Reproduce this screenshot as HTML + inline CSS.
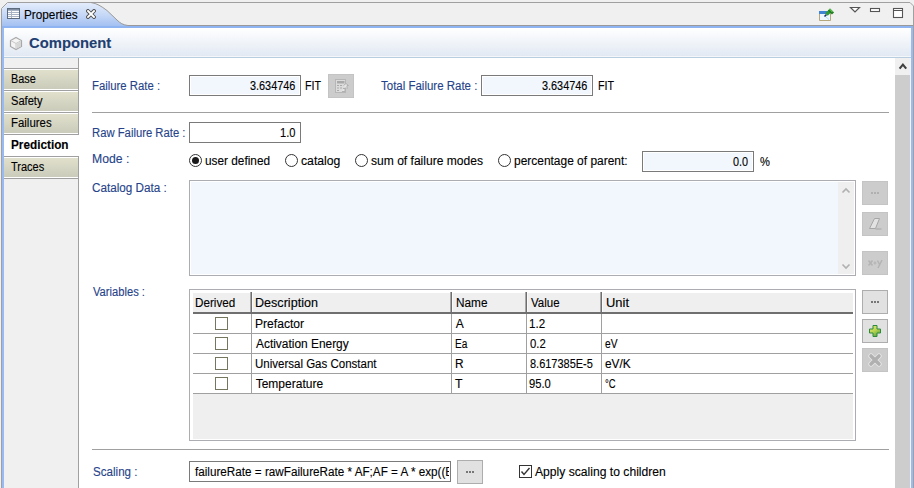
<!DOCTYPE html>
<html><head><meta charset="utf-8"><style>
html,body{margin:0;padding:0;}
body{width:914px;height:488px;overflow:hidden;position:relative;background:#f0f0f0;font-family:"Liberation Sans",sans-serif;}
div,span,svg{position:absolute;box-sizing:border-box;}
span{white-space:pre;transform-origin:0 0;-webkit-text-stroke:0.12px currentColor;}
</style></head><body>
<svg style="left:0;top:0" width="914" height="488" viewBox="0 0 914 488">
<defs>
<linearGradient id="tabg" x1="0" y1="0" x2="0" y2="1">
<stop offset="0" stop-color="#e3ecfb"/><stop offset="0.5" stop-color="#c4d7f6"/><stop offset="1" stop-color="#9dbcf0"/></linearGradient>
<linearGradient id="hdrg" x1="0" y1="0" x2="0" y2="1">
<stop offset="0" stop-color="#ffffff"/><stop offset="1" stop-color="#e2e9f3"/></linearGradient>
<linearGradient id="lt" x1="0" y1="0" x2="0" y2="1">
<stop offset="0" stop-color="#e0e0cf"/><stop offset="1" stop-color="#cfcfbf"/></linearGradient>
</defs>
<path d="M1.5,488 L1.5,8.5 L7.5,2.5 L910,2.5 L913.5,6 L913.5,488" fill="#f0f0f0" stroke="#a0a0a0" stroke-width="1"/>
<path d="M2,28 L2,9 L8,3 L92,3 C97,3.5 101,6 107,10.5 L117,20 C120,23 123,25 128,25.5 L128,28 Z" fill="url(#tabg)"/>
<path d="M91,2.5 C97,3.5 101,6 107,10.5 L117,20 C120,23 123,25 128,25.5 L913,25.5" fill="none" stroke="#999" stroke-width="1"/>
<rect x="2" y="26" width="911" height="462" fill="#99bbf4"/><rect x="2" y="26" width="911" height="2" fill="#8fb4f2"/>
<rect x="4" y="28" width="907" height="460" fill="#ffffff"/>
<rect x="4" y="28" width="907" height="28" fill="url(#hdrg)"/>
<rect x="4" y="56" width="907" height="1" fill="#f4f7fa"/>
<rect x="4" y="57" width="907" height="1" fill="#b8cde0"/>
<rect x="4" y="58" width="74" height="430" fill="#f0f0f0"/>
<rect x="78" y="58" width="1" height="430" fill="#a0a0a0"/>
</svg>
<div style="left:4px;top:68px;width:74px;height:1px;background:#a0a0a0;"></div>
<div style="left:4px;top:69px;width:74px;height:1px;background:#fff;"></div>
<div style="left:4px;top:70px;width:74px;height:19px;background:linear-gradient(#e0e0cc,#cbcbbb);"></div>
<div style="left:4px;top:89px;width:74px;height:1px;background:#fff;"></div>
<div style="left:4px;top:90px;width:74px;height:1px;background:#a0a0a0;"></div>
<div style="left:4px;top:91px;width:74px;height:1px;background:#fff;"></div>
<div style="left:4px;top:92px;width:74px;height:19px;background:linear-gradient(#e0e0cc,#cbcbbb);"></div>
<div style="left:4px;top:111px;width:74px;height:1px;background:#fff;"></div>
<div style="left:4px;top:112px;width:74px;height:1px;background:#a0a0a0;"></div>
<div style="left:4px;top:113px;width:74px;height:1px;background:#fff;"></div>
<div style="left:4px;top:114px;width:74px;height:19px;background:linear-gradient(#e0e0cc,#cbcbbb);"></div>
<div style="left:4px;top:133px;width:74px;height:1px;background:#fff;"></div>
<div style="left:4px;top:134px;width:75px;height:22px;background:#fff;"></div>
<div style="left:4px;top:134px;width:75px;height:1px;background:#a0a0a0;"></div>
<div style="left:4px;top:156px;width:74px;height:1px;background:#a0a0a0;"></div>
<div style="left:4px;top:157px;width:74px;height:1px;background:#fff;"></div>
<div style="left:4px;top:158px;width:74px;height:19px;background:linear-gradient(#e0e0cc,#cbcbbb);"></div>
<div style="left:4px;top:177px;width:74px;height:1px;background:#fff;"></div>
<div style="left:4px;top:178px;width:74px;height:1px;background:#a0a0a0;"></div>
<span style="left:10.59px;top:72.59px;font-size:12px;line-height:12px;color:#000;transform:scaleX(0.9073);">Base</span>
<span style="left:11.04px;top:94.59px;font-size:12px;line-height:12px;color:#000;transform:scaleX(0.9254);">Safety</span>
<span style="left:10.55px;top:116.59px;font-size:12px;line-height:12px;color:#000;transform:scaleX(0.9516);">Failures</span>
<span style="left:10.72px;top:138.59px;font-size:12px;line-height:12px;color:#000;font-weight:bold;transform:scaleX(0.9807);">Prediction</span>
<span style="left:11.23px;top:160.59px;font-size:12px;line-height:12px;color:#000;transform:scaleX(0.9155);">Traces</span>
<span style="left:24.42px;top:8.89px;font-size:12px;line-height:12px;color:#000;transform:scaleX(0.9812);">Properties</span>
<span style="left:28.93px;top:35.48px;font-size:15.5px;line-height:15.5px;color:#1f3e72;font-weight:bold;transform:scaleX(0.9555);">Component</span>
<div style="left:895px;top:58px;width:15px;height:17px;background:#f0f0f0;"></div>
<div style="left:895px;top:75px;width:15px;height:413px;background:#cdcdcd;"></div>
<div style="left:910px;top:58px;width:1px;height:430px;background:#f4f4f4;"></div>
<span style="left:92.05px;top:79.59px;font-size:12px;line-height:12px;color:#26438a;transform:scaleX(0.9456);">Failure Rate :</span>
<span style="left:380.51px;top:79.59px;font-size:12px;line-height:12px;color:#26438a;transform:scaleX(0.9567);">Total Failure Rate :</span>
<span style="left:92.06px;top:126.59px;font-size:12px;line-height:12px;color:#26438a;transform:scaleX(0.9403);">Raw Failure Rate :</span>
<span style="left:91.98px;top:152.59px;font-size:12px;line-height:12px;color:#26438a;transform:scaleX(1.0173);">Mode :</span>
<span style="left:92.41px;top:182.09px;font-size:12px;line-height:12px;color:#26438a;transform:scaleX(0.9760);">Catalog Data :</span>
<span style="left:92.91px;top:285.59px;font-size:12px;line-height:12px;color:#26438a;transform:scaleX(0.9304);">Variables :</span>
<span style="left:92.52px;top:465.59px;font-size:12px;line-height:12px;color:#26438a;transform:scaleX(0.9662);">Scaling :</span>
<div style="left:92px;top:112px;width:797px;height:1px;background:#a0a0a0;"></div>
<div style="left:92px;top:449px;width:797px;height:1px;background:#a0a0a0;"></div>
<div style="left:189px;top:75px;width:112px;height:21px;border:1px solid #7a7a7a;background:#f2f7fe;box-shadow:inset 0 0 0 1px #fff;"></div>
<span style="left:249.85px;top:79.99px;font-size:12px;line-height:12px;color:#000;transform:scaleX(0.9063);">3.634746</span>
<span style="left:305.31px;top:79.99px;font-size:12px;line-height:12px;color:#000;transform:scaleX(0.8929);">FIT</span>
<div style="left:328px;top:74px;width:26px;height:24px;background:#cccccc;border:1px solid #c4c4c4;"></div>
<div style="left:481px;top:75px;width:112px;height:21px;border:1px solid #7a7a7a;background:#f2f7fe;box-shadow:inset 0 0 0 1px #fff;"></div>
<span style="left:541.85px;top:79.99px;font-size:12px;line-height:12px;color:#000;transform:scaleX(0.9063);">3.634746</span>
<span style="left:597.51px;top:79.99px;font-size:12px;line-height:12px;color:#000;transform:scaleX(0.8929);">FIT</span>
<div style="left:189px;top:122px;width:112px;height:21px;border:1px solid #7a7a7a;background:#fff;box-shadow:inset 0 0 0 1px #fff;"></div>
<span style="left:279.96px;top:126.69px;font-size:12px;line-height:12px;color:#000;transform:scaleX(0.9281);">1.0</span>
<div style="left:189px;top:154px;width:13px;height:13px;border:1px solid #333;border-radius:50%;background:#fff;"></div>
<div style="left:192px;top:157px;width:7px;height:7px;border-radius:50%;background:#1a1a1a;"></div>
<span style="left:204.71px;top:154.59px;font-size:12px;line-height:12px;color:#000;transform:scaleX(0.9845);">user defined</span>
<div style="left:284.5px;top:154px;width:13px;height:13px;border:1px solid #333;border-radius:50%;background:#fff;"></div>
<span style="left:301.29px;top:154.59px;font-size:12px;line-height:12px;color:#000;transform:scaleX(1.0187);">catalog</span>
<div style="left:355px;top:154px;width:13px;height:13px;border:1px solid #333;border-radius:50%;background:#fff;"></div>
<span style="left:371.10px;top:154.59px;font-size:12px;line-height:12px;color:#000;transform:scaleX(1.0054);">sum of failure modes</span>
<div style="left:497.5px;top:154px;width:13px;height:13px;border:1px solid #333;border-radius:50%;background:#fff;"></div>
<span style="left:513.80px;top:154.59px;font-size:12px;line-height:12px;color:#000;transform:scaleX(0.9955);">percentage of parent:</span>
<div style="left:642px;top:151px;width:112px;height:21px;border:1px solid #7a7a7a;background:#f2f7fe;box-shadow:inset 0 0 0 1px #fff;"></div>
<span style="left:733.15px;top:155.99px;font-size:12px;line-height:12px;color:#000;transform:scaleX(0.9045);">0.0</span>
<span style="left:759.63px;top:155.99px;font-size:12px;line-height:12px;color:#000;transform:scaleX(0.9293);">%</span>
<div style="left:189px;top:180px;width:667px;height:96px;border:1px solid #abadb3;background:#f2f7fe;box-shadow:inset 0 0 0 1px #fff;"></div>
<div style="left:838px;top:182px;width:16px;height:92px;background:#efefef;"></div>
<div style="left:862px;top:181px;width:26px;height:24px;background:#cccccc;border:1px solid #c4c4c4;"></div>
<div style="left:862px;top:212px;width:26px;height:24px;background:#cccccc;border:1px solid #c4c4c4;"></div>
<div style="left:862px;top:251px;width:26px;height:24px;background:#cccccc;border:1px solid #c4c4c4;"></div>
<div style="left:189px;top:289px;width:667px;height:152px;border:1px solid #abadb3;background:#fff;"></div>
<div style="left:193px;top:293px;width:660px;height:20px;background:#efefef;"></div>
<div style="left:193px;top:312px;width:660px;height:2px;background:#6f6f6f;"></div>
<div style="left:250px;top:292px;width:1px;height:20px;background:#a8a8a8;"></div>
<div style="left:251px;top:292px;width:1px;height:20px;background:#6e6e6e;"></div>
<div style="left:252px;top:293px;width:1px;height:19px;background:#fafafa;"></div>
<div style="left:251px;top:314px;width:1px;height:80px;background:#a0a0a0;"></div>
<div style="left:450px;top:292px;width:1px;height:20px;background:#a8a8a8;"></div>
<div style="left:451px;top:292px;width:1px;height:20px;background:#6e6e6e;"></div>
<div style="left:452px;top:293px;width:1px;height:19px;background:#fafafa;"></div>
<div style="left:451px;top:314px;width:1px;height:80px;background:#a0a0a0;"></div>
<div style="left:525px;top:292px;width:1px;height:20px;background:#a8a8a8;"></div>
<div style="left:526px;top:292px;width:1px;height:20px;background:#6e6e6e;"></div>
<div style="left:527px;top:293px;width:1px;height:19px;background:#fafafa;"></div>
<div style="left:526px;top:314px;width:1px;height:80px;background:#a0a0a0;"></div>
<div style="left:600px;top:292px;width:1px;height:20px;background:#a8a8a8;"></div>
<div style="left:601px;top:292px;width:1px;height:20px;background:#6e6e6e;"></div>
<div style="left:602px;top:293px;width:1px;height:19px;background:#fafafa;"></div>
<div style="left:601px;top:314px;width:1px;height:80px;background:#a0a0a0;"></div>
<div style="left:193px;top:333px;width:660px;height:1px;background:#a0a0a0;"></div>
<div style="left:193px;top:353px;width:660px;height:1px;background:#a0a0a0;"></div>
<div style="left:193px;top:373px;width:660px;height:1px;background:#a0a0a0;"></div>
<div style="left:193px;top:393px;width:660px;height:1px;background:#a0a0a0;"></div>
<div style="left:193px;top:394px;width:660px;height:45px;background:#efefef;"></div>
<span style="left:195.43px;top:296.99px;font-size:12px;line-height:12px;color:#000;transform:scaleX(0.9747);">Derived</span>
<span style="left:255.45px;top:296.99px;font-size:12px;line-height:12px;color:#000;transform:scaleX(1.0481);">Description</span>
<span style="left:456.02px;top:296.99px;font-size:12px;line-height:12px;color:#000;transform:scaleX(0.9836);">Name</span>
<span style="left:530.90px;top:296.99px;font-size:12px;line-height:12px;color:#000;transform:scaleX(0.9589);">Value</span>
<span style="left:605.53px;top:296.99px;font-size:12px;line-height:12px;color:#000;transform:scaleX(1.0784);">Unit</span>
<div style="left:215px;top:317px;width:13px;height:13px;border:1px solid #76765e;background:#fff;"></div>
<span style="left:254.99px;top:318.19px;font-size:12px;line-height:12px;color:#000;transform:scaleX(1.0084);">Prefactor</span>
<span style="left:455.70px;top:318.19px;font-size:12px;line-height:12px;color:#000;transform:scaleX(1.0000);">A</span>
<span style="left:529.13px;top:318.19px;font-size:12px;line-height:12px;color:#000;transform:scaleX(0.9671);">1.2</span>
<div style="left:215px;top:337px;width:13px;height:13px;border:1px solid #76765e;background:#fff;"></div>
<span style="left:256.00px;top:338.19px;font-size:12px;line-height:12px;color:#000;transform:scaleX(0.9925);">Activation Energy</span>
<span style="left:454.86px;top:338.19px;font-size:12px;line-height:12px;color:#000;transform:scaleX(0.8394);">Ea</span>
<span style="left:529.53px;top:338.19px;font-size:12px;line-height:12px;color:#000;transform:scaleX(0.9423);">0.2</span>
<span style="left:604.87px;top:338.19px;font-size:12px;line-height:12px;color:#000;transform:scaleX(0.8511);">eV</span>
<div style="left:215px;top:357px;width:13px;height:13px;border:1px solid #76765e;background:#fff;"></div>
<span style="left:255.14px;top:358.19px;font-size:12px;line-height:12px;color:#000;transform:scaleX(0.9587);">Universal Gas Constant</span>
<span style="left:454.71px;top:358.19px;font-size:12px;line-height:12px;color:#000;transform:scaleX(0.9859);">R</span>
<span style="left:529.54px;top:358.19px;font-size:12px;line-height:12px;color:#000;transform:scaleX(0.9145);">8.617385E-5</span>
<span style="left:604.81px;top:358.19px;font-size:12px;line-height:12px;color:#000;transform:scaleX(0.9881);">eV/K</span>
<div style="left:215px;top:377px;width:13px;height:13px;border:1px solid #76765e;background:#fff;"></div>
<span style="left:255.70px;top:378.19px;font-size:12px;line-height:12px;color:#000;transform:scaleX(1.0000);">Temperature</span>
<span style="left:455.39px;top:378.19px;font-size:12px;line-height:12px;color:#000;transform:scaleX(1.0294);">T</span>
<span style="left:529.44px;top:378.19px;font-size:12px;line-height:12px;color:#000;transform:scaleX(0.9327);">95.0</span>
<span style="left:604.75px;top:378.19px;font-size:12px;line-height:12px;color:#000;transform:scaleX(0.7886);">°C</span>
<div style="left:862px;top:290px;width:26px;height:24px;background:#e1e1e1;border:1px solid #adadad;"></div>
<div style="left:862px;top:319px;width:26px;height:24px;background:#e1e1e1;border:1px solid #adadad;"></div>
<div style="left:862px;top:348px;width:26px;height:24px;background:#cccccc;border:1px solid #c4c4c4;"></div>
<div style="left:189px;top:461px;width:262px;height:21px;border:1px solid #7a7a7a;background:#fff;box-shadow:inset 0 0 0 1px #fff;"></div>
<div style="left:191px;top:462px;width:258px;height:19px;overflow:hidden;">
<span style="left:4.11px;top:3.59px;font-size:12px;line-height:12px;color:#000;transform:scaleX(0.9750);">failureRate = rawFailureRate * AF;AF = A * exp((E</span>
</div>
<div style="left:457px;top:460px;width:26px;height:24px;background:#e1e1e1;border:1px solid #adadad;"></div>
<div style="left:519px;top:465px;width:13px;height:13px;border:1px solid #333;background:#fff;"></div>
<span style="left:535.20px;top:465.59px;font-size:12px;line-height:12px;color:#000;transform:scaleX(1.0109);">Apply scaling to children</span>
<svg style="left:7px;top:8px" width="13" height="11" viewBox="0 0 13 11" shape-rendering="crispEdges"><rect x="0" y="0" width="13" height="11" fill="#5d6b7e"/>
<rect x="1" y="1" width="11" height="9" fill="#a9b5c5"/>
<rect x="1" y="1" width="11" height="1" fill="#7f8ea3"/>
<rect x="1" y="3" width="3" height="1" fill="#fff"/><rect x="5" y="3" width="7" height="1" fill="#fff"/>
<rect x="1" y="5" width="3" height="1" fill="#fff"/><rect x="5" y="5" width="7" height="1" fill="#fff"/>
<rect x="1" y="7" width="3" height="1" fill="#fff"/><rect x="5" y="7" width="7" height="1" fill="#fff"/>
<rect x="1" y="9" width="3" height="1" fill="#fff"/><rect x="5" y="9" width="7" height="1" fill="#fff"/></svg>
<svg style="left:86px;top:9px" width="10" height="10" viewBox="0 0 10 10">
<path d="M2,2 L8,8 M8,2 L2,8" stroke="#505050" stroke-width="3.8" stroke-linecap="square"/>
<path d="M2,2 L8,8 M8,2 L2,8" stroke="#fff" stroke-width="1.9" stroke-linecap="square"/></svg>
<svg style="left:9px;top:36px" width="14" height="15" viewBox="0 0 14 15">
<path d="M7,1.5 L12.5,4.5 L12.5,10.5 L7,13.5 L1.5,10.5 L1.5,4.5 Z" fill="#f4f4f4" stroke="#a8a8a8" stroke-width="1.2"/>
<path d="M1.8,4.6 L7,7.5 L12.2,4.6 M7,7.5 L7,13.2" fill="none" stroke="#c8c8c8" stroke-width="1"/>
<path d="M7.5,7.8 L12,5.3 L12,10.2 L7.5,12.7 Z" fill="#d6d6d6"/></svg>
<svg style="left:818px;top:7px" width="18" height="15" viewBox="0 0 18 15">
<path d="M1.5,4 L1.5,13.5 L12.5,13.5 L12.5,6" fill="#eef7fd" stroke="#b5a77c" stroke-width="1"/>
<rect x="1" y="4" width="10" height="3" fill="#3f84d4"/>
<path d="M8,10 L11,12.5" stroke="#b9d8f0" stroke-width="1"/>
<path d="M6.5,9.5 L8.5,7.5" stroke="#1a2a6a" stroke-width="1.6"/>
<path d="M8.5,7.5 L12,4" stroke="#2f9a36" stroke-width="3.6"/>
<path d="M11,2.5 L15,6.5" stroke="#1f7a22" stroke-width="3"/>
<path d="M11.5,2 L14.5,5" stroke="#5cc04a" stroke-width="1.2"/></svg>
<svg style="left:849px;top:6px" width="60" height="14" viewBox="0 0 60 14">
<path d="M1.5,1.5 L10.5,1.5 L6,6 Z" fill="#fff" stroke="#555" stroke-width="1.2" stroke-linejoin="miter"/>
<rect x="21.5" y="2.5" width="9" height="3" fill="#fff" stroke="#555" stroke-width="1.1"/>
<rect x="44.5" y="2.5" width="9" height="9" fill="#fff" stroke="#555" stroke-width="1.1"/>
<rect x="45" y="4" width="8" height="1" fill="#555"/></svg>
<svg style="left:897px;top:61px" width="12" height="10" viewBox="0 0 12 10">
<path d="M2.6,7.6 L5.9,3.6 L9.2,7.6" fill="none" stroke="#404040" stroke-width="2.1"/></svg>
<svg style="left:840px;top:186px" width="12" height="10" viewBox="0 0 12 10">
<path d="M2.5,6.5 L6,3 L9.5,6.5" fill="none" stroke="#b0b0b0" stroke-width="1.6"/></svg>
<svg style="left:840px;top:261px" width="12" height="10" viewBox="0 0 12 10">
<path d="M2.5,3.5 L6,7 L9.5,3.5" fill="none" stroke="#b0b0b0" stroke-width="1.6"/></svg>
<svg style="left:871px;top:192px" width="8" height="2" viewBox="0 0 8 2" shape-rendering="crispEdges"><rect x="0" y="0" width="2" height="2" fill="#b0b0b0"/><rect x="3" y="0" width="2" height="2" fill="#b0b0b0"/><rect x="6" y="0" width="2" height="2" fill="#b0b0b0"/></svg>
<svg style="left:871px;top:301px" width="8" height="2" viewBox="0 0 8 2" shape-rendering="crispEdges"><rect x="0" y="0" width="2" height="2" fill="#777"/><rect x="3" y="0" width="2" height="2" fill="#777"/><rect x="6" y="0" width="2" height="2" fill="#777"/></svg>
<svg style="left:466px;top:471px" width="8" height="2" viewBox="0 0 8 2" shape-rendering="crispEdges"><rect x="0" y="0" width="2" height="2" fill="#777"/><rect x="3" y="0" width="2" height="2" fill="#777"/><rect x="6" y="0" width="2" height="2" fill="#777"/></svg>
<svg style="left:862px;top:212px" width="26" height="24" viewBox="0 0 26 24">
<path d="M12.5,6.5 L17.5,6.5 L13.5,16.5 L7.5,16.5 Z" fill="#e2e2e2" stroke="#a6a6a6" stroke-width="1"/>
<path d="M13.5,17 L19.5,17" stroke="#a6a6a6" stroke-width="1"/></svg>
<svg style="left:862px;top:251px" width="26" height="24" viewBox="0 0 26 24">
<path d="M6.5,9.5 L10.5,14.5 M10.5,9.5 L6.5,14.5" stroke="#b4b4b4" stroke-width="1.6"/>
<path d="M11.5,12 L14.5,12 M13,10.5 L13,13.5" stroke="#b4b4b4" stroke-width="1.2"/>
<path d="M15.5,9.5 L17.5,13.5 M20,9 L16,17" stroke="#b4b4b4" stroke-width="1.5"/></svg>
<svg style="left:868px;top:324px" width="14" height="14" viewBox="0 0 14 14">
<defs><linearGradient id="gp" x1="0" y1="0" x2="0.6" y2="1"><stop offset="0" stop-color="#e2ee78"/><stop offset="0.55" stop-color="#bcd450"/><stop offset="1" stop-color="#5fa83e"/></linearGradient></defs>
<path d="M5,1.5 H9 V5 H12.5 V9 H9 V12.5 H5 V9 H1.5 V5 H5 Z" fill="url(#gp)" stroke="#2b8a3c" stroke-width="1"/></svg>
<svg style="left:868px;top:353px" width="14" height="14" viewBox="0 0 14 14">
<path d="M3,3 L11,11 M11,3 L3,11" stroke="#e8e8e8" stroke-width="5.2" stroke-linecap="round"/>
<path d="M3,3 L11,11 M11,3 L3,11" stroke="#b0b0b0" stroke-width="3.6" stroke-linecap="round"/></svg>
<svg style="left:335px;top:79px" width="15" height="15" viewBox="0 0 15 15">
<rect x="0.5" y="0.5" width="10" height="13" fill="#dcdcdc" stroke="#b6b6b6" stroke-width="1"/>
<rect x="2" y="2" width="7.5" height="2.5" fill="#a9a9a9"/>
<rect x="2" y="6" width="2" height="1" fill="#a9a9a9"/><rect x="5" y="6" width="2" height="1" fill="#a9a9a9"/>
<rect x="2" y="8.5" width="2" height="1" fill="#a9a9a9"/><rect x="5" y="8.5" width="2" height="1" fill="#a9a9a9"/>
<rect x="2" y="11" width="2" height="1" fill="#a9a9a9"/>
<path d="M8.5,6.5 L11,4.5 L13.5,6.5 L12,6.5 L12,10 M8,9.5 L10,9.5 L10,12.5 L7,12.5" fill="#e6e6e6" stroke="#b0b0b0" stroke-width="1"/></svg>
<svg style="left:519px;top:465px" width="13" height="13" viewBox="0 0 13 13">
<path d="M2.5,6.5 L5,9.5 L10.5,3" fill="none" stroke="#333" stroke-width="1.4"/></svg>
</body></html>
